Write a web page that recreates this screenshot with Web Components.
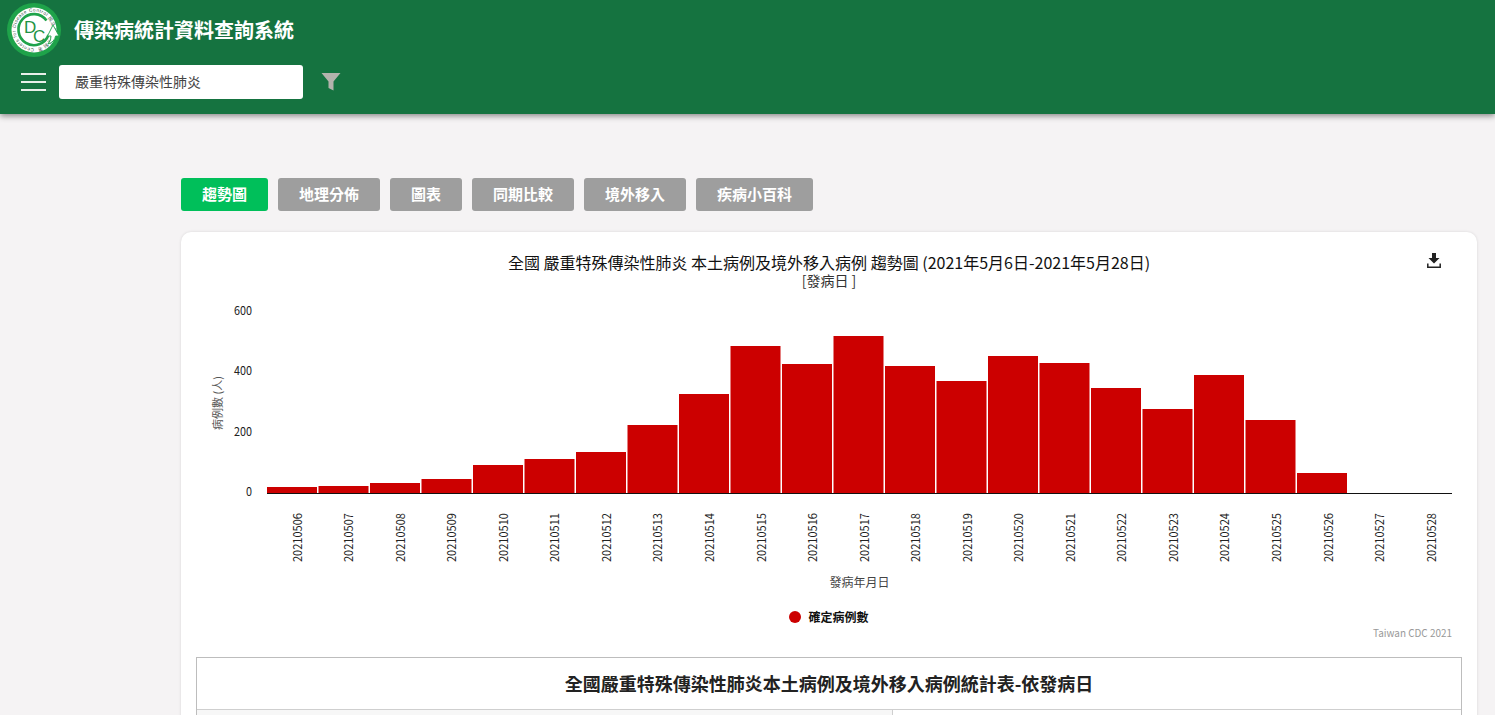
<!DOCTYPE html>
<html lang="zh-Hant">
<head>
<meta charset="utf-8">
<title>傳染病統計資料查詢系統</title>
<style>
    html, body { margin: 0; height: 715px; overflow: hidden; background: #f5f3f4; }
    body { font-family: "Noto Sans CJK TC", "Noto Sans", sans-serif; }
</style>
</head>
<body>
<app-shell>
    <app-header slot="header" title-text="傳染病統計資料查詢系統" disease="嚴重特殊傳染性肺炎"></app-header>
    <tab-bar active="趨勢圖" tabs="趨勢圖,地理分佈,圖表,同期比較,境外移入,疾病小百科"></tab-bar>
    <content-card>
        <trend-chart></trend-chart>
        <stat-table caption="全國嚴重特殊傳染性肺炎本土病例及境外移入病例統計表-依發病日"></stat-table>
    </content-card>
</app-shell>

<script>
/* 版面外框 */
class AppShell extends HTMLElement {
    constructor() {
        super();
        this.attachShadow({ mode: 'open' }).innerHTML = `
            <style>
                :host { display: block; }
                main { padding: 64px 18px 0 181px; }
            </style>
            <slot name="header"></slot>
            <main><slot></slot></main>
        `;
    }
}
customElements.define('app-shell', AppShell);

/* 頂部綠色標題列 */
class AppHeader extends HTMLElement {
    constructor() {
        super();
        const shadow = this.attachShadow({ mode: 'open' });
        shadow.innerHTML = `
            <style>
                :host {
                    display: block; height: 114px; background: #157340;
                    box-shadow: 0 2px 6px rgba(0,0,0,0.45);
                    position: relative; color: #fff;
                }
                .top { display: flex; align-items: flex-start; height: 62px; padding: 3px 0 0 7px; box-sizing: border-box; gap: 13px; }
                .top svg { flex: none; display: block; }
                h1 { margin: 0; font-size: 20px; font-weight: 700; line-height: 28px; padding-top: 13px; }
                .bar { display: flex; align-items: center; height: 34px; margin-top: 3px; padding-left: 21px; }
                .burger { width: 25px; height: 18px; display: flex; flex-direction: column; justify-content: space-between; margin-right: 13px; }
                .burger i { display: block; height: 2px; background: #e8efe9; }
                .select {
                    width: 228px; height: 34px; padding-left: 16px; background: #fff; border-radius: 3px;
                    font-size: 14px; line-height: 32px; color: #444;
                }
                .filter { margin-left: 18px; display: block; }
            </style>
            <div class="top">
                <svg width="54" height="54" viewBox="0 0 54 54">
                    <defs><path id="ring" d="M27 45.5 A18.5 18.5 0 1 1 27.01 45.5" fill="none"/></defs>
                    <circle cx="27" cy="27" r="27" fill="#1fa34a"/>
                    <circle cx="27" cy="27" r="22.5" fill="#fff"/>
                    <text font-size="4.6" fill="#33523f" font-family="Liberation Sans, sans-serif">
                        <textPath href="#ring" startOffset="0" textLength="112">Centers for Disease Control 國立疾病管制署</textPath>
                    </text>
                    <path d="M39.5 17.5 A15.5 15.5 0 1 0 41.5 32" fill="none" stroke="#1fa34a" stroke-width="2.6"/>
                    <path d="M46 22 L52 33 L48.6 33 Q47.5 39 41 41 Q44.5 37 44 33 L40.5 33 Z" fill="#fff" stroke="#1fa34a" stroke-width=".9"/>
                    <text x="17" y="30" font-family="Liberation Sans, sans-serif" font-size="17" fill="#1f9344">D</text>
                    <text x="26" y="39" font-family="Liberation Sans, sans-serif" font-size="17" fill="#1f9344">C</text>
                </svg>
                <h1></h1>
            </div>
            <div class="bar">
                <div class="burger"><i></i><i></i><i></i></div>
                <div class="select"></div>
                <svg class="filter" width="20" height="20" viewBox="0 0 20 20">
                    <path d="M0.5 1 H19.5 L12.5 9.5 V18.5 L7.5 16 V9.5 Z" fill="#b3b3ac"/>
                </svg>
            </div>
        `;
        this._shadow = shadow;
    }
    connectedCallback() {
        this._shadow.querySelector('h1').textContent = this.getAttribute('title-text');
        this._shadow.querySelector('.select').textContent = this.getAttribute('disease');
    }
}
customElements.define('app-header', AppHeader);

/* 分頁按鈕列 */
class TabBar extends HTMLElement {
    constructor() {
        super();
        this.attachShadow({ mode: 'open' }).innerHTML = `
            <style>
                :host { display: flex; gap: 10px; height: 33px; margin-bottom: 21px; }
                button {
                    border: none; border-radius: 3px; height: 33px; padding: 0 21px 2px; background: #9e9e9e; color: #fff;
                    font: 700 15px/31px "Noto Sans CJK TC", sans-serif;
                }
                button.on { background: #00bf5a; }
            </style>
        `;
    }
    connectedCallback() {
        const active = this.getAttribute('active');
        this.getAttribute('tabs').split(',').forEach((t) => {
            const b = document.createElement('button');
            b.textContent = t;
            if (t === active) b.className = 'on';
            this.shadowRoot.appendChild(b);
        });
    }
}
customElements.define('tab-bar', TabBar);

/* 白色卡片 */
class ContentCard extends HTMLElement {
    constructor() {
        super();
        this.attachShadow({ mode: 'open' }).innerHTML = `
            <style>
                :host {
                    display: block; background: #fff; border-radius: 10px; padding: 0 15px 20px;
                    box-shadow: 0 0 3px rgba(0,0,0,0.12);
                }
            </style>
            <slot></slot>
        `;
    }
}
customElements.define('content-card', ContentCard);

/* 趨勢圖 */
class TrendChart extends HTMLElement {
    constructor() {
        super();
        const font = '"Noto Sans CJK TC", sans-serif';
        const tops = [487, 486, 483, 479, 465, 459, 452, 425, 394, 346, 364, 336, 366, 381, 356, 363, 388, 409, 375, 420, 473];
        const base = 493, x0 = 86, step = 51.5;
        let bars = '', ticks = '';
        tops.forEach((t, i) => {
            bars += `<rect x="${(x0 + i * step).toFixed(1)}" y="${t}" width="50" height="${base - t}" fill="#cc0000"/>`;
        });
        for (let i = 0; i < 23; i++) {
            const day = 20210506 + i;
            const cx = 120.5 + i * 51.55;
            ticks += `<text transform="translate(${cx.toFixed(1)},562) rotate(-90)" font-size="12" textLength="49" lengthAdjust="spacingAndGlyphs" fill="#222">${day}</text>`;
        }
        const yl = [[600, 315], [400, 375], [200, 436], [0, 496]].map(([v, y]) =>
            `<text x="71" y="${y}" text-anchor="end" font-size="12" textLength="${v ? 18 : 6}" lengthAdjust="spacingAndGlyphs" fill="#222">${v}</text>`).join('');
        this.attachShadow({ mode: 'open' }).innerHTML = `
            <style>
                :host { display: block; height: 425px; }
                svg { display: block; font-family: ${font}; }
            </style>
            <svg width="1296" height="425" viewBox="0 232 1296 425" style="margin-left:-15px">
                <text x="648" y="269" text-anchor="middle" font-size="16" fill="#111">全國 嚴重特殊傳染性肺炎 本土病例及境外移入病例 趨勢圖 (2021年5月6日-2021年5月28日)</text>
                <text x="648" y="286" text-anchor="middle" font-size="14" fill="#333">[發病日 ]</text>
                <path d="M1251 253h4v5h3.5l-5.5 5.5-5.5-5.5h3.5z" fill="#222"/>
                <path d="M1246.8 263.5v3.7h12.4v-3.7" fill="none" stroke="#222" stroke-width="1.5"/>
                ${yl}
                <text transform="translate(41,430) rotate(-90)" font-size="11" fill="#555">病例數 (人)</text>
                ${bars}
                <line x1="86" x2="1271" y1="493.5" y2="493.5" stroke="#111" stroke-width="1"/>
                ${ticks}
                <text x="678.5" y="587" text-anchor="middle" font-size="12" fill="#444">發病年月日</text>
                <circle cx="614" cy="617" r="6" fill="#cc0000"/>
                <text x="627.5" y="622" font-size="12" font-weight="700" fill="#111">確定病例數</text>
                <text x="1271" y="637" text-anchor="end" font-size="11" textLength="79" lengthAdjust="spacingAndGlyphs" fill="#999">Taiwan CDC 2021</text>
            </svg>
        `;
    }
}
customElements.define('trend-chart', TrendChart);

/* 統計表 */
class StatTable extends HTMLElement {
    constructor() {
        super();
        this.attachShadow({ mode: 'open' }).innerHTML = `
            <style>
                :host { display: block; border: 1px solid #bdbdbd; color: #222; }
                .cap { height: 51px; line-height: 51px; text-align: center; font-size: 18px; font-weight: 700; border-bottom: 1px solid #cfcfcf; }
                .row { display: grid; grid-template-columns: 695px 1fr; height: 40px; }
                .row div { background: #f7f7f7; }
                .row div + div { background: #fff; border-left: 1px solid #cfcfcf; }
            </style>
            <div class="cap"></div>
            <div class="row"><div></div><div></div></div>
        `;
    }
    connectedCallback() {
        this.shadowRoot.querySelector('.cap').textContent = this.getAttribute('caption');
    }
}
customElements.define('stat-table', StatTable);
</script>
</body>
</html>
